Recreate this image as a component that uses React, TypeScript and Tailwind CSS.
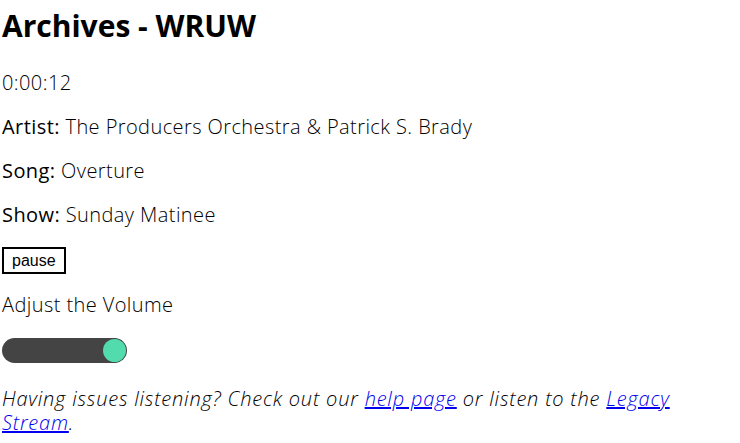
export default function App() {
  return (
    <div className="min-h-[443px] bg-white pl-[2px] font-['Open_Sans',sans-serif] text-black">
      <h1 className="pt-[8px] text-[30px] font-bold leading-[36px]">Archives - WRUW</h1>

      <p className="mt-[27px] text-[20px] font-light leading-[24px] tracking-[0.42px]">0:00:12</p>

      <p className="mt-[20px] text-[20px] font-light leading-[24px] tracking-[0.42px]">
        <span className="font-medium">Artist:</span> The Producers Orchestra &amp; Patrick S. Brady
      </p>
      <p className="mt-[20px] text-[20px] font-light leading-[24px] tracking-[0.42px]">
        <span className="font-medium">Song:</span> Overture
      </p>
      <p className="mt-[20px] text-[20px] font-light leading-[24px] tracking-[0.42px]">
        <span className="font-medium">Show:</span> Sunday Matinee
      </p>

      <button className="mt-[20px] block border-2 border-black bg-white px-[8px] py-[2px] font-['Liberation_Sans',Arial,sans-serif] text-[16px] leading-[19px]">
        pause
      </button>

      <p className="mt-[19px] text-[20px] font-light leading-[24px] tracking-[0.42px]">Adjust the Volume</p>

      {/* volume slider */}
      <div className="mt-[21px] flex h-[25px] w-[125px] items-center justify-end rounded-full bg-[#444444] pr-[1px]">
        <div className="h-[23px] w-[23px] rounded-full bg-[#52dbad]" />
      </div>

      <p className="mt-[24px] max-w-[700px] text-[20px] font-light italic leading-[24px] tracking-[0.8px]">
        Having issues listening? Check out our{' '}
        <a href="#" className="text-[#0000ee] underline">help page</a> or listen to the{' '}
        <a href="#" className="text-[#0000ee] underline">Legacy Stream</a>.
      </p>
    </div>
  );
}
